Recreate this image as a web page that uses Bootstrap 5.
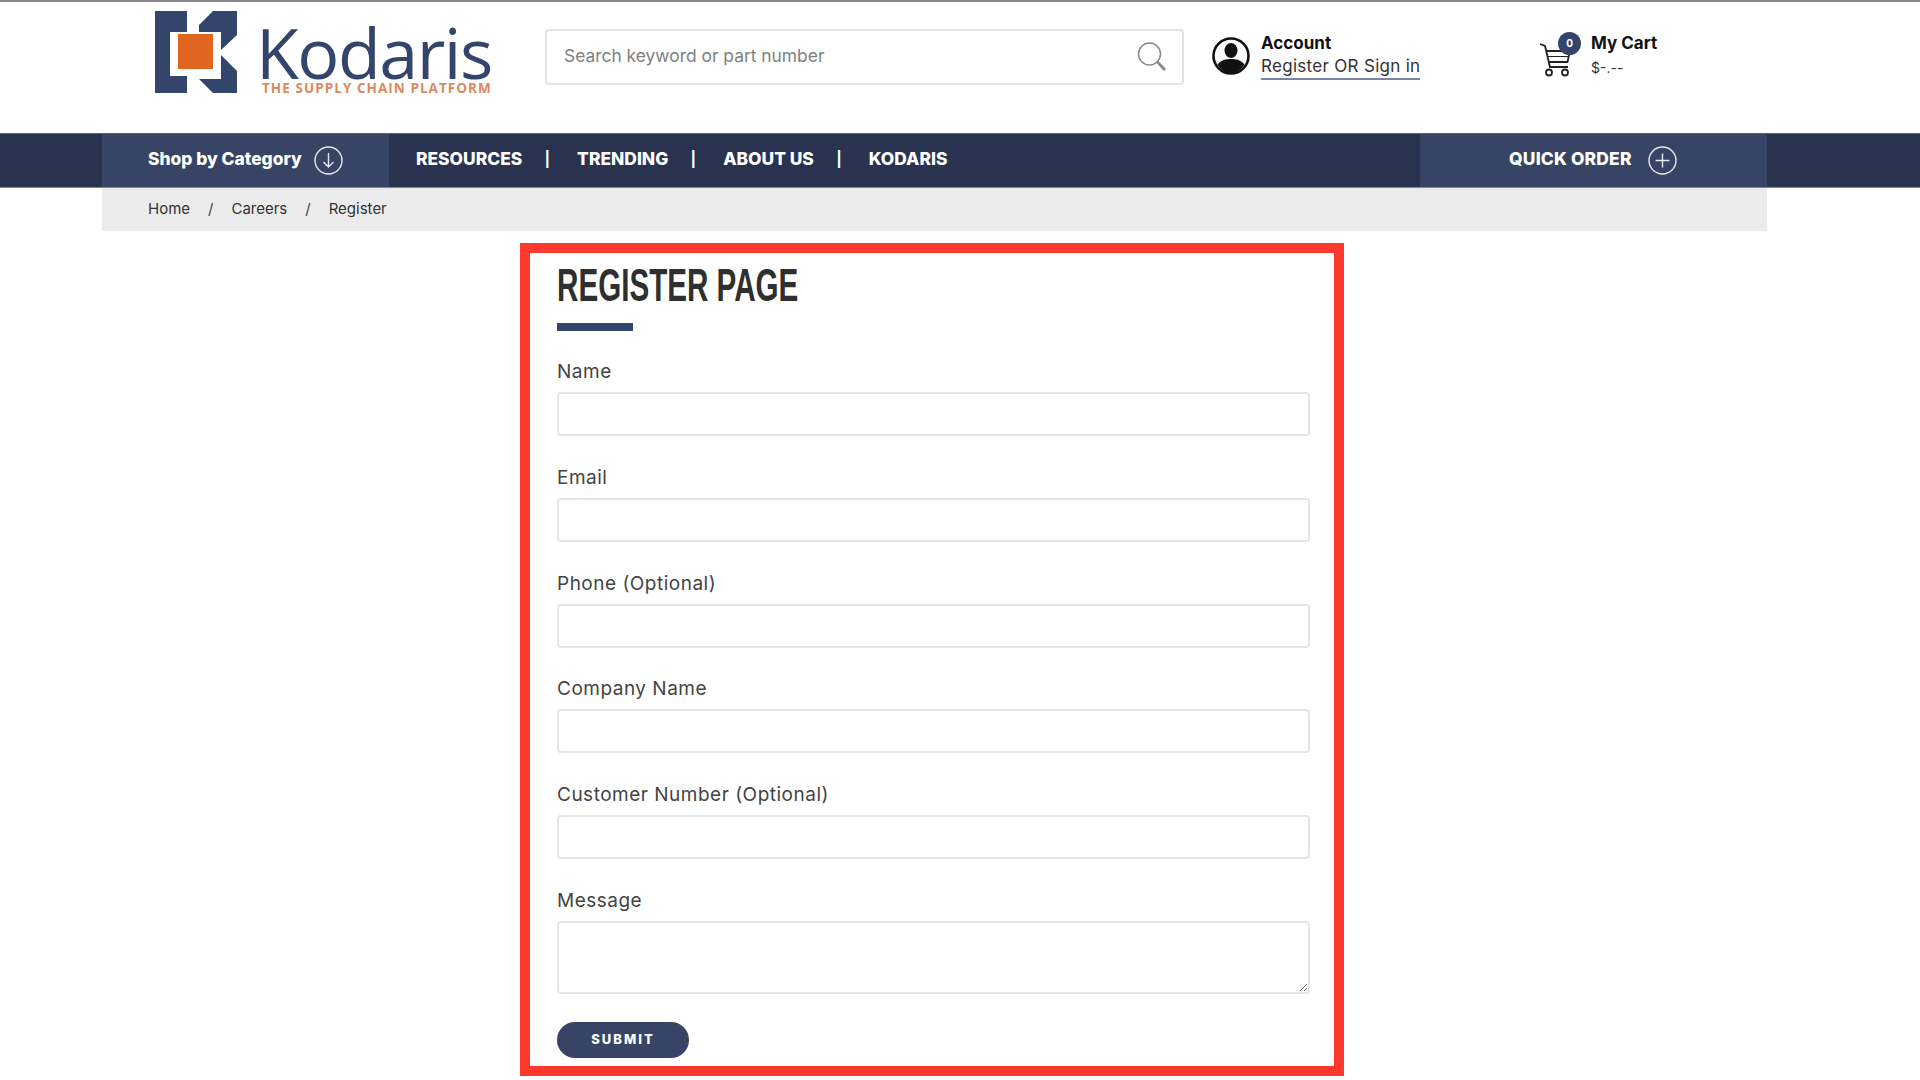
<!DOCTYPE html>
<html lang="en">
<head>
  <meta charset="UTF-8">
  <title>Kodaris - Register</title>
  <link href="https://cdn.jsdelivr.net/npm/bootstrap@5.3.3/dist/css/bootstrap.min.css" rel="stylesheet">
  <style>
    body { font-family: "Inter", "Liberation Sans", sans-serif; color: #333; background: #fff; border-top: 2px solid #8a8a8a; overflow-x: hidden; }
    .site-head { height: 131px; padding-left: 155px; }
    .logo-mark { width: 82px; height: 83px; margin-top: 9px; }
    .logo-text { margin-left: 24px; margin-top: 20px; width: 284px; }
    .logo-name { font-family: "Open Sans", sans-serif; font-weight: 500; font-size: 70px; line-height: 60px; color: #34456b; letter-spacing: -1.5px; margin-left: -5px; }
    .logo-tag { font-family: "Open Sans", sans-serif; font-weight: 700; font-size: 13.5px; line-height: 12px; letter-spacing: 1.05px; color: #dc8a5e; margin-left: 1px; }
    .search-box { width: 639px; height: 56px; margin-top: 27px; border: 2px solid #e2e2e2; border-radius: 4px; padding: 0 14px 0 15px; }
    .search-box input { border: 0; outline: 0; flex: 1; font-size: 17.4px; color: #777; padding-bottom: 2px; }
    .search-box input::placeholder { color: #808080; opacity: 1; }
    .acct { margin-left: 28px; margin-top: 31px; width: 327px; }
    .acct-text { margin-left: 11px; }
    .head-strong { font-weight: 700; font-size: 17px; line-height: 20px; color: #111; }
    .acct-link { display: block; font-size: 17px; letter-spacing: .3px; line-height: 24px; margin-top: 1px; color: #333; text-decoration: none; border-bottom: 2px solid #7a86a8; }
    .cart { margin-top: 31px; width: 130px; position: relative; }
    .cart-count { position: absolute; left: 19px; top: -1px; width: 23px; height: 23px; border-radius: 50%; background: #34456b; color: #fff; font-size: 10px; font-weight: 700; }
    .cart-text { margin-left: 17px; }
    .cart-price { font-size: 14px; line-height: 20px; margin-top: 5px; color: #333; }
    .main-nav { height: 55px; background: #29324f; border-top: 1px solid #59637f; border-bottom: 1px solid #7d86a0; }
    .nav-inner { width: 1665px; margin-left: 102px; height: 100%; }
    .nav-shop { width: 287px; padding-left: 46px; background: #384465; color: #fff; font-weight: 800; font-size: 17.4px; padding-bottom: 2px; }
    .nav-links { padding-left: 27px; flex: 1; color: #fff; font-weight: 800; font-size: 17.4px; padding-bottom: 2px; }
    .nav-links a { color: #fff; text-decoration: none; }
    .nav-sep { margin: 0 27px 0 22.3px; font-weight: 700; font-size: 15px; }
    .nav-quick { width: 347px; padding-left: 89px; background: #384465; color: #fff; font-weight: 800; font-size: 17.4px; letter-spacing: .2px; padding-bottom: 2px; }
    .round-ico { width: 29px; height: 29px; margin-left: 12px; margin-top: 2px; }
    .nav-quick .round-ico { margin-left: 16px; }
    .crumb-bar { width: 1665px; height: 43px; margin-left: 102px; background: #ebebeb; padding-left: 46px; font-size: 15px; color: #333; }
    .crumb-bar .breadcrumb { --bs-breadcrumb-divider-color: #444; --bs-breadcrumb-item-padding-x: 18px; margin: 0; }
    .crumb-bar a { color: #333; text-decoration: none; }
    .crumb-bar .active { color: #333; }
    .reg-box { width: 824px; margin: 12px 0 0 520px; border: 10px solid #ff382d; padding: 0 24px 8px 27px; }
    .reg-title { display: inline-block; vertical-align: top; font-family: "Liberation Sans", sans-serif; font-weight: 700; font-size: 47px; line-height: 64px; margin: 0; color: #2f2f2f; text-transform: uppercase; white-space: nowrap; transform: scaleX(.63); transform-origin: left center; }
    .reg-bar { width: 76px; height: 8px; background: #34456b; margin: 6px 0 27px; }
    .field-row { margin-bottom: 27.8px; }
    .field-row .form-label { font-size: 19px; letter-spacing: .5px; line-height: 24px; padding-top: 2px; margin-bottom: 8px; color: #444; display: block; }
    .field-row .form-control { height: 44px; border: 2px solid #e3e6ea; border-radius: 4px; }
    .field-row textarea.form-control { height: 73px; }
    .btn-submit { width: 132px; height: 36px; border-radius: 18px; background: #384465; color: #fff; font-size: 13px; font-weight: 800; letter-spacing: 2px; border: 0; padding: 0; display: block; }
  </style>
</head>
<body>
  <!-- Header -->
  <header class="site-head d-flex align-items-start">
    <svg class="logo-mark" viewBox="0 0 82 83" aria-hidden="true">
      <path fill="#34456b" d="M0 0H32V21H15V65H32V82H0Z"/>
      <path fill="#34456b" d="M44 14L58 0H82V24L66 39V21H44Z"/>
      <path fill="#34456b" d="M66 44L82 60V82H58L44 68H66Z"/>
      <rect fill="#e0651f" x="23" y="23" width="35" height="35"/>
    </svg>
    <div class="logo-text">
      <div class="logo-name">Kodaris</div>
      <div class="logo-tag">THE SUPPLY CHAIN PLATFORM</div>
    </div>
    <div class="search-box d-flex align-items-center">
      <input type="text" placeholder="Search keyword or part number">
      <svg width="32" height="32" viewBox="0 0 32 32" fill="none" stroke="#8a8a8a" aria-hidden="true">
        <circle cx="13.5" cy="13" r="11" stroke-width="1.5"/>
        <path d="M21.5 21L29 29" stroke-width="2.8"/>
      </svg>
    </div>
    <div class="acct d-flex align-items-start">
      <svg width="38" height="38" viewBox="0 0 38 38" class="mt-1" aria-hidden="true">
        <circle cx="19" cy="19" r="17.5" fill="#fff" stroke="#111" stroke-width="2.6"/>
        <ellipse cx="19" cy="13.5" rx="6.5" ry="7.5" fill="#111"/>
        <path fill="#111" d="M5.5 27.5C9 23 14 22 19 22S29 23 32.5 27.5C29 33 24.5 36 19 36S9 33 5.5 27.5Z"/>
      </svg>
      <div class="acct-text">
        <div class="head-strong">Account</div>
        <a class="acct-link" href="#">Register OR Sign in</a>
      </div>
    </div>
    <div class="cart d-flex align-items-start">
      <svg width="35" height="36" viewBox="0 0 35 36" fill="none" stroke="#222" stroke-width="1.8" class="mt-2" aria-hidden="true">
        <path d="M1 3L6 5L11 26H29"/>
        <path d="M7 10H31L28.5 21H9.5"/>
        <path d="M8 15.5H30" stroke-width="1"/>
        <circle cx="10" cy="31.5" r="3"/>
        <circle cx="26" cy="31.5" r="3"/>
      </svg>
      <span class="cart-count d-flex align-items-center justify-content-center">0</span>
      <div class="cart-text">
        <div class="head-strong">My Cart</div>
        <div class="cart-price">$-.--</div>
      </div>
    </div>
  </header>

  <!-- Main nav -->
  <nav class="main-nav">
    <div class="nav-inner d-flex">
      <div class="nav-shop d-flex align-items-center">
        <span>Shop by Category</span>
        <svg class="round-ico" viewBox="0 0 29 29" fill="none" stroke="#e8e8ee" stroke-width="1.4" aria-hidden="true">
          <circle cx="14.5" cy="14.5" r="13.5"/>
          <path d="M14.5 7V21M9.5 16L14.5 21L19.5 16"/>
        </svg>
      </div>
      <div class="nav-links d-flex align-items-center">
        <a href="#">RESOURCES</a><span class="nav-sep">|</span>
        <a href="#">TRENDING</a><span class="nav-sep">|</span>
        <a href="#">ABOUT US</a><span class="nav-sep">|</span>
        <a href="#">KODARIS</a>
      </div>
      <div class="nav-quick d-flex align-items-center">
        <span>QUICK ORDER</span>
        <svg class="round-ico" viewBox="0 0 29 29" fill="none" stroke="#e8e8ee" stroke-width="1.4" aria-hidden="true">
          <circle cx="14.5" cy="14.5" r="13.5"/>
          <path d="M14.5 7.5V21.5M7.5 14.5H21.5"/>
        </svg>
      </div>
    </div>
  </nav>

  <!-- Breadcrumb -->
  <div class="crumb-bar d-flex align-items-center">
    <ol class="breadcrumb">
      <li class="breadcrumb-item"><a href="#">Home</a></li>
      <li class="breadcrumb-item"><a href="#">Careers</a></li>
      <li class="breadcrumb-item active">Register</li>
    </ol>
  </div>

  <!-- Register form -->
  <main class="reg-box">
    <h1 class="reg-title">Register Page</h1>
    <div class="reg-bar"></div>
    <form>
      <div class="field-row"><label class="form-label" for="fName">Name</label><input id="fName" class="form-control" type="text"></div>
      <div class="field-row"><label class="form-label" for="fEmail">Email</label><input id="fEmail" class="form-control" type="email"></div>
      <div class="field-row"><label class="form-label" for="fPhone">Phone (Optional)</label><input id="fPhone" class="form-control" type="text"></div>
      <div class="field-row"><label class="form-label" for="fCompany">Company Name</label><input id="fCompany" class="form-control" type="text"></div>
      <div class="field-row"><label class="form-label" for="fCustomer">Customer Number (Optional)</label><input id="fCustomer" class="form-control" type="text"></div>
      <div class="field-row"><label class="form-label" for="fMessage">Message</label><textarea id="fMessage" class="form-control"></textarea></div>
      <button class="btn btn-submit" type="button">SUBMIT</button>
    </form>
  </main>

  <script src="https://cdn.jsdelivr.net/npm/bootstrap@5.3.3/dist/js/bootstrap.bundle.min.js"></script>
</body>
</html>
